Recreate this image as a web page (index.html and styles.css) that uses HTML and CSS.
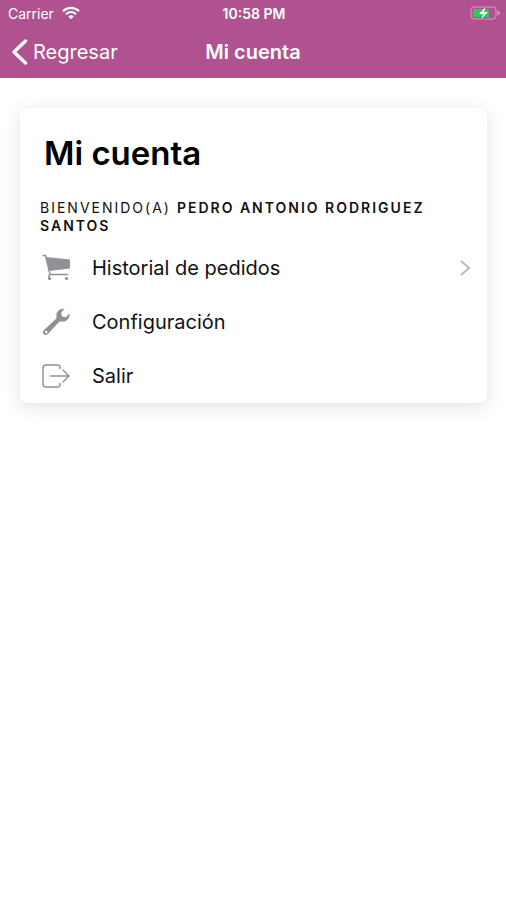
FILE: index.html
```html
<!DOCTYPE html>
<html lang="es">
<head>
<meta charset="utf-8">
<meta name="viewport" content="width=device-width, initial-scale=1">
<title>Mi cuenta</title>
<link rel="stylesheet" href="styles.css">
</head>
<body>
<header class="header">
  <div class="status">
    <div class="carrier">
      <span>Carrier</span>
      <svg class="wifi" viewBox="0 0 18 14" aria-hidden="true">
        <path d="M1 5.2C5.500 .8 12.500 .8 17 5.200M4 8.200c2.900-2.700 7.100-2.700 10 0" fill="none" stroke="currentColor" stroke-width="2.200"/>
        <path d="M6.300 10.400c1.600-1.400 3.800-1.400 5.400 0L9 13.200z" fill="currentColor"/>
      </svg>
    </div>
    <time class="clock">10:58 PM</time>
    <svg class="battery" viewBox="0 0 30 14" aria-hidden="true">
      <rect x="1" y="1" width="25" height="12" rx="3" fill="none" stroke="#d59bc1"/>
      <path d="M27.500 4.500v5q2.500-1 2.500-2.500t-2.500-2.500z" fill="#d59bc1"/>
      <rect x="3" y="3" width="16" height="8" rx="1" fill="#30c759"/>
      <path d="M15.500 1L9 8h4l-1.500 5L18 6h-4z" fill="#fff"/>
    </svg>
  </div>
  <nav class="toolbar">
    <button class="back" type="button">
      <svg class="back-icon" viewBox="0 0 16 26" aria-hidden="true"><path d="M13.500 2L2 13l11.500 11" fill="none" stroke="currentColor" stroke-width="3.400" stroke-linecap="round" stroke-linejoin="round"/></svg>
      <span>Regresar</span>
    </button>
    <div class="title">Mi cuenta</div>
  </nav>
</header>
<main class="content">
  <section class="card">
    <h1 class="heading">Mi cuenta</h1>
    <p class="welcome">Bienvenido(a) <strong>Pedro Antonio Rodriguez Santos</strong></p>
    <ul class="menu">
      <li><a class="item" href="#historial">
        <svg class="icon" viewBox="0 0 28 28" aria-hidden="true">
          <path d="M4 3L28 5.500V14.500L7.500 17z" fill="#8f9195"/>
          <path d="M.5 1.500h3L8 20.500H26M7.500 20.500l-1 3" fill="none" stroke="#8f9195" stroke-width="1.400"/>
          <circle cx="7.500" cy="24.500" r="1.600" fill="#8f9195"/><circle cx="24.500" cy="24.500" r="1.600" fill="#8f9195"/>
        </svg>
        <span class="label">Historial de pedidos</span>
        <svg class="chevron" viewBox="0 0 12 18" aria-hidden="true"><path d="M2 2l8 7-8 7" fill="none" stroke="#bcbcbe" stroke-width="2"/></svg>
      </a></li>
      <li><a class="item" href="#configuracion">
        <svg class="icon" viewBox="0 0 28 28" aria-hidden="true">
          <path fill-rule="evenodd" fill="#8f9195" d="M22.500 1C18 0 13.500 4 14.500 9c0 1-.4 1.700-1 2.300L2 22c-3 3 .8 7 4 4l10.500-11.500c.7-.7 1.300-1 2.400-.9 5.400 1 9.500-3.600 8.600-8.100l-3.700 3.700-3.800-.6-.9-3.800zM4.200 22.800a1.300 1.300 0 1 1 0 2.600 1.300 1.300 0 0 1 0-2.600z"/>
        </svg>
        <span class="label">Configuración</span>
      </a></li>
      <li><a class="item" href="#salir">
        <svg class="icon" viewBox="0 0 28 28" aria-hidden="true">
          <path d="M18 7V5q0-2-2.500-2H4Q1 3 1 6v16q0 3 3 3h11.500q2.500 0 2.500-2v-2M8 14h19M20.500 7.500L27 14l-6.500 6.500" fill="none" stroke="#8f9195" stroke-width="1.400" stroke-linejoin="round"/>
        </svg>
        <span class="label">Salir</span>
      </a></li>
    </ul>
  </section>
</main>
</body>
</html>
```
FILE: styles.css
```css
* {
  box-sizing: border-box;
}

body {
  margin: 0;
  background: #fff;
  color: #111;
  font-family: Inter, "Liberation Sans", sans-serif;
}

.header {
  background: #b0528f;
  color: #fff;
}

.status,
.toolbar {
  display: grid;
  grid-template-columns: 1fr auto 1fr;
  align-items: center;
}

.status {
  height: 26px;
  padding: 0 6px 0 8px;
  font-size: 14px;
}

.carrier {
  display: flex;
  align-items: center;
  gap: 8px;
}

.wifi {
  width: 18px;
  height: 14px;
}

.clock {
  font-weight: 600;
}

.battery {
  width: 30px;
  height: 14px;
  justify-self: end;
}

.toolbar {
  height: 52px;
  padding: 0 12px;
}

.back {
  display: flex;
  align-items: center;
  gap: 5px;
  justify-self: start;
  padding: 0;
  border: 0;
  background: none;
  color: inherit;
  font: inherit;
  font-size: 20px;
}

.back-icon {
  width: 16px;
  height: 26px;
}

.title {
  font-size: 20px;
  font-weight: 600;
}

.content {
  padding: 30px 19px 30px 20px;
}

.card {
  border-radius: 8px;
  background: #fff;
  box-shadow: 0 4px 18px rgba(0, 0, 0, 0.12);
}

.heading {
  margin: 0;
  padding: 24px 24px 0;
  color: #000;
  font-size: 33px;
  font-weight: 600;
  line-height: 42px;
}

.welcome {
  margin: 0;
  padding: 25px 20px 6px;
  font-size: 14px;
  line-height: 18px;
  letter-spacing: 2px;
  text-transform: uppercase;
}

.welcome strong {
  font-weight: 600;
}

.menu {
  margin: 0;
  padding: 0;
  list-style: none;
}

.item {
  display: flex;
  align-items: center;
  height: 54px;
  padding: 0 16px 0 22px;
  color: inherit;
  font-size: 20px;
  text-decoration: none;
}

.icon {
  width: 28px;
  height: 28px;
  margin-right: 22px;
}

.label {
  flex: 1;
}

.chevron {
  width: 12px;
  height: 18px;
}
```
